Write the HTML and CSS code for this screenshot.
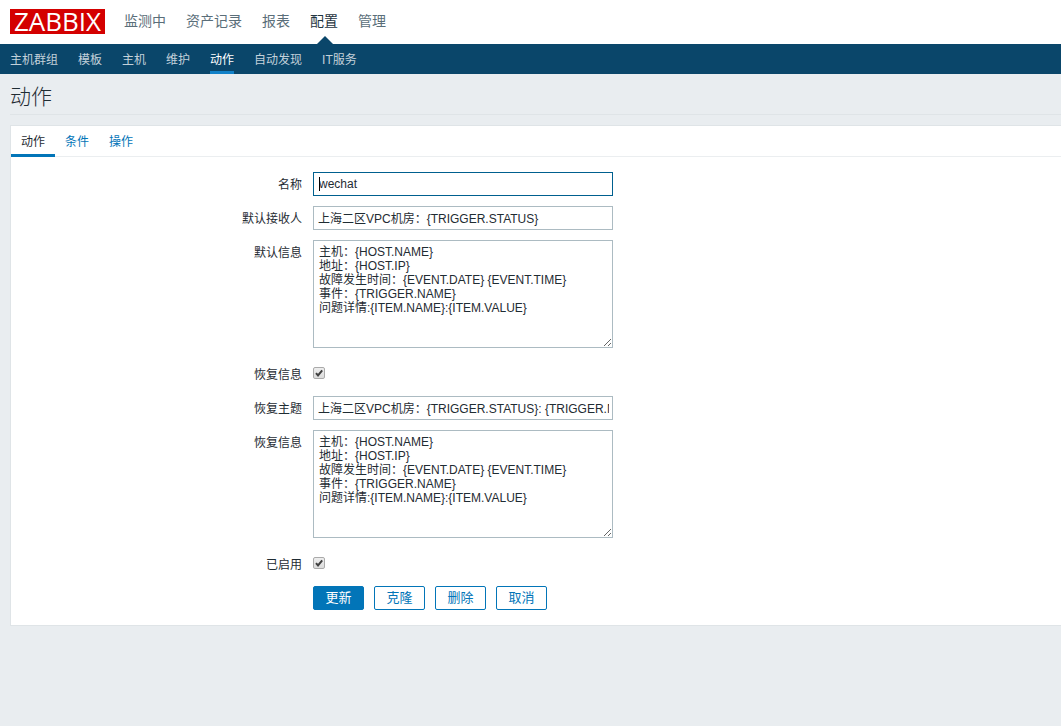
FILE: index.html
```html
<!DOCTYPE html>
<html lang="zh-CN">
<head>
<meta charset="utf-8">
<title>动作 - Zabbix</title>
<link rel="stylesheet" href="styles.css">
</head>
<body>
<header class="top">
  <a class="logo" href="#">ZABBIX</a>
  <nav class="main-nav">
    <a href="#">监测中</a>
    <a href="#">资产记录</a>
    <a href="#">报表</a>
    <a href="#" class="selected">配置</a>
    <a href="#">管理</a>
  </nav>
</header>
<nav class="sub-nav">
  <a href="#">主机群组</a>
  <a href="#">模板</a>
  <a href="#">主机</a>
  <a href="#">维护</a>
  <a href="#" class="selected">动作</a>
  <a href="#">自动发现</a>
  <a href="#">IT服务</a>
</nav>
<main class="content">
  <h1 class="title">动作</h1>
  <form class="panel">
    <nav class="tabs">
      <a href="#" class="selected">动作</a>
      <a href="#">条件</a>
      <a href="#">操作</a>
    </nav>
    <div class="rows">
      <div class="row">
        <label for="name">名称</label>
        <div class="field"><input class="text active" id="name" type="text" value="wechat"><span class="caret"></span></div>
      </div>
      <div class="row">
        <label for="subject">默认接收人</label>
        <div class="field"><input class="text" id="subject" type="text" value="上海二区VPC机房：{TRIGGER.STATUS}"></div>
      </div>
      <div class="row tall">
        <label for="message">默认信息</label>
        <div class="field"><textarea class="text area" id="message">主机：{HOST.NAME}
地址：{HOST.IP}
故障发生时间：{EVENT.DATE} {EVENT.TIME}
事件：{TRIGGER.NAME}
问题详情:{ITEM.NAME}:{ITEM.VALUE}</textarea></div>
      </div>
      <div class="row">
        <label for="recovery">恢复信息</label>
        <div class="field check"><input class="box" id="recovery" type="checkbox" checked><svg class="tick" viewBox="0 0 12 12"><path d="M3 6.2 5 8.4 9.2 3.4" /></svg></div>
      </div>
      <div class="row">
        <label for="rsubject">恢复主题</label>
        <div class="field"><input class="text" id="rsubject" type="text" value="上海二区VPC机房：{TRIGGER.STATUS}: {TRIGGER.NAME}"></div>
      </div>
      <div class="row tall">
        <label for="rmessage">恢复信息</label>
        <div class="field"><textarea class="text area" id="rmessage">主机：{HOST.NAME}
地址：{HOST.IP}
故障发生时间：{EVENT.DATE} {EVENT.TIME}
事件：{TRIGGER.NAME}
问题详情:{ITEM.NAME}:{ITEM.VALUE}</textarea></div>
      </div>
      <div class="row">
        <label for="enabled">已启用</label>
        <div class="field check"><input class="box" id="enabled" type="checkbox" checked><svg class="tick" viewBox="0 0 12 12"><path d="M3 6.2 5 8.4 9.2 3.4" /></svg></div>
      </div>
      <div class="buttons">
        <button type="button" class="primary">更新</button>
        <button type="button">克隆</button>
        <button type="button">删除</button>
        <button type="button">取消</button>
      </div>
    </div>
  </form>
</main>
</body>
</html>
```
FILE: styles.css
```css
* { box-sizing: border-box; }

body {
  margin: 0;
  background: #e9edf0;
  color: #1f2c33;
  font: 12px/14px "Liberation Sans", "Noto Sans CJK SC", sans-serif;
}

a { text-decoration: none; }

.top {
  display: flex;
  align-items: flex-start;
  gap: 19px;
  height: 44px;
  padding: 0 10px;
  background: #fff;
}

.logo {
  width: 95px;
  height: 25px;
  margin-top: 9px;
  background: #d40000;
  color: #fff;
  font: 500 26px/25px "Open Sans", sans-serif;
  text-align: center;
}

.main-nav { display: flex; gap: 20px; height: 44px; }

.main-nav a {
  position: relative;
  color: #5a6e79;
  font-size: 14px;
  line-height: 42px;
}

.main-nav .selected { color: #1f3541; }

.main-nav .selected::after {
  content: "";
  position: absolute;
  bottom: 0;
  left: 50%;
  margin-left: -7px;
  border: 8px solid transparent;
  border-top: 0;
  border-bottom-color: #0a466a;
}

.sub-nav {
  display: flex;
  gap: 20px;
  height: 30px;
  padding: 0 10px;
  background: #0a466a;
}

.sub-nav a {
  border-bottom: 3px solid transparent;
  color: #c3d1da;
  line-height: 32px;
}

.sub-nav .selected { border-color: #1281c8; color: #fff; }

.content { padding-left: 10px; }

.title {
  margin: 0 0 10px;
  padding: 11px 0 5px;
  border-bottom: 1px solid #dfe4e7;
  font-size: 21px;
  font-weight: 300;
  line-height: 24px;
}

.panel {
  border: 1px solid #dfe4e7;
  border-right: 0;
  background: #fff;
}

.tabs { display: flex; height: 31px; border-bottom: 1px solid #ebeef0; }

.tabs a {
  height: 31px;
  padding: 0 10px;
  border-bottom: 3px solid transparent;
  color: #0275b8;
  line-height: 32px;
}

.tabs .selected { border-color: #0275b8; color: #1f2c33; }

.rows {
  display: flex;
  flex-direction: column;
  gap: 10px;
  padding: 15px 0;
}

.row { display: flex; gap: 11px; min-height: 24px; }

.tall { min-height: 112px; }

.row label { width: 291px; line-height: 26px; height: 24px; text-align: right; }

.field { position: relative; width: 300px; }

.text {
  display: block;
  width: 100%;
  height: 24px;
  margin: 0;
  padding: 0 3px 2px 4px;
  border: 1px solid #acbbc2;
  border-radius: 0;
  outline: 0;
  background: #fff;
  color: #1f2c33;
  font: inherit;
}

.active { padding: 0 5px; border-color: #00608f; }

.area { height: 108px; padding: 4px 5px; resize: both; overflow: auto; }

.caret {
  position: absolute;
  top: 5px;
  left: 6px;
  width: 1px;
  height: 14px;
  background: #000;
}

.check { display: flex; align-items: center; height: 22px; }

.box {
  appearance: none;
  width: 12px;
  height: 12px;
  margin: 0;
  border: 1px solid #aaa;
  border-radius: 2px;
  background: linear-gradient(#eee, #dcdcdc);
}

.tick {
  width: 12px;
  height: 12px;
  margin-left: -12px;
  fill: none;
  stroke: #404040;
  stroke-width: 2;
  pointer-events: none;
}

.buttons { display: flex; gap: 10px; padding-left: 302px; }

.buttons button {
  height: 24px;
  padding: 0 11px;
  min-width: 51px;
  border: 1px solid #0275b8;
  border-radius: 2px;
  background: #fff;
  color: #0275b8;
  font: inherit;
  font-size: 13px;
}

.buttons .primary { background: #0275b8; color: #fff; }
```
